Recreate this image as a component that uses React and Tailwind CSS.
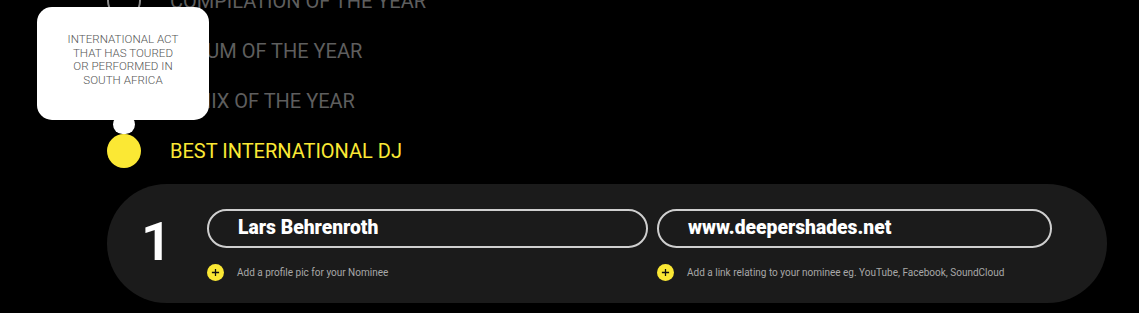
import React from "react";

const categories = [
  { label: "COMPILATION OF THE YEAR", active: false },
  { label: "ALBUM OF THE YEAR", active: false },
  { label: "REMIX OF THE YEAR", active: false },
  { label: "BEST INTERNATIONAL DJ", active: true },
];

function PlusDot() {
  return (
    <span className="w-[17px] h-[17px] rounded-full bg-[#fbe834] flex items-center justify-center shrink-0">
      <svg className="w-[9px] h-[9px]" viewBox="0 0 10 10" fill="none" stroke="#111" strokeWidth="1.4">
        <path d="M5 1v8M1 5h8" />
      </svg>
    </span>
  );
}

export default function App() {
  return (
    <div
      className="w-[1139px] h-[313px] bg-black overflow-hidden relative"
      style={{ fontFamily: "Roboto, 'Liberation Sans', sans-serif" }}
    >
      <div className="flex flex-col -mt-[24px] pl-[107px]">
        {categories.map((c) => (
          <div key={c.label} className="h-[50px] flex items-center">
            {c.active ? (
              <span className="w-[34px] h-[34px] rounded-full bg-[#fbe834] shrink-0"></span>
            ) : (
              <span className="w-[34px] h-[34px] rounded-full border-2 border-[#8a8a8a] shrink-0"></span>
            )}
            <span
              className={
                "ml-[29px] text-[20px] leading-none " +
                (c.active ? "text-[#fbe834]" : "text-[#5e5e5e]")
              }
            >
              {c.label}
            </span>
          </div>
        ))}
      </div>

      {/* tooltip */}
      <div className="absolute left-[37px] top-[7px] w-[172px] h-[113px] bg-white rounded-[15px] flex justify-center pt-[26px]">
        <p className="text-[11.6px] leading-[13.7px] text-[#555] text-center font-light">
          INTERNATIONAL ACT
          <br />
          THAT HAS TOURED
          <br />
          OR PERFORMED IN
          <br />
          SOUTH AFRICA
        </p>
        <span className="absolute left-[76px] top-[108px] w-[22px] h-[19px] bg-white rounded-full"></span>
      </div>

      <div className="mt-[8px] ml-[107px] w-[1000px] h-[119px] bg-[#1b1b1b] rounded-full flex items-center pl-[34px]">
        <span className="w-[66px] text-white font-semibold text-[54px] leading-none -mt-[4px]">1</span>
        <div className="flex flex-col self-start pt-[25px]">
          <div className="flex gap-[9px]">
            <div className="w-[441px] h-[39px] border-2 border-[#cfcfcf] rounded-full flex items-center pl-[29px]">
              <span className="text-white font-black text-[19.3px]">Lars Behrenroth</span>
            </div>
            <div className="w-[395px] h-[39px] border-2 border-[#cfcfcf] rounded-full flex items-center pl-[29px]">
              <span className="text-white font-black text-[19.3px]">www.deepershades.net</span>
            </div>
          </div>
          <div className="flex gap-[9px] mt-[16px]">
            <div className="w-[441px] flex items-center gap-[13px]">
              <PlusDot />
              <span className="text-[10px] text-[#a8a8a8]">Add a profile pic for your Nominee</span>
            </div>
            <div className="w-[395px] flex items-center gap-[13px]">
              <PlusDot />
              <span className="text-[10px] text-[#a8a8a8] whitespace-nowrap">
                Add a link relating to your nominee eg. YouTube, Facebook, SoundCloud
              </span>
            </div>
          </div>
        </div>
      </div>
    </div>
  );
}
